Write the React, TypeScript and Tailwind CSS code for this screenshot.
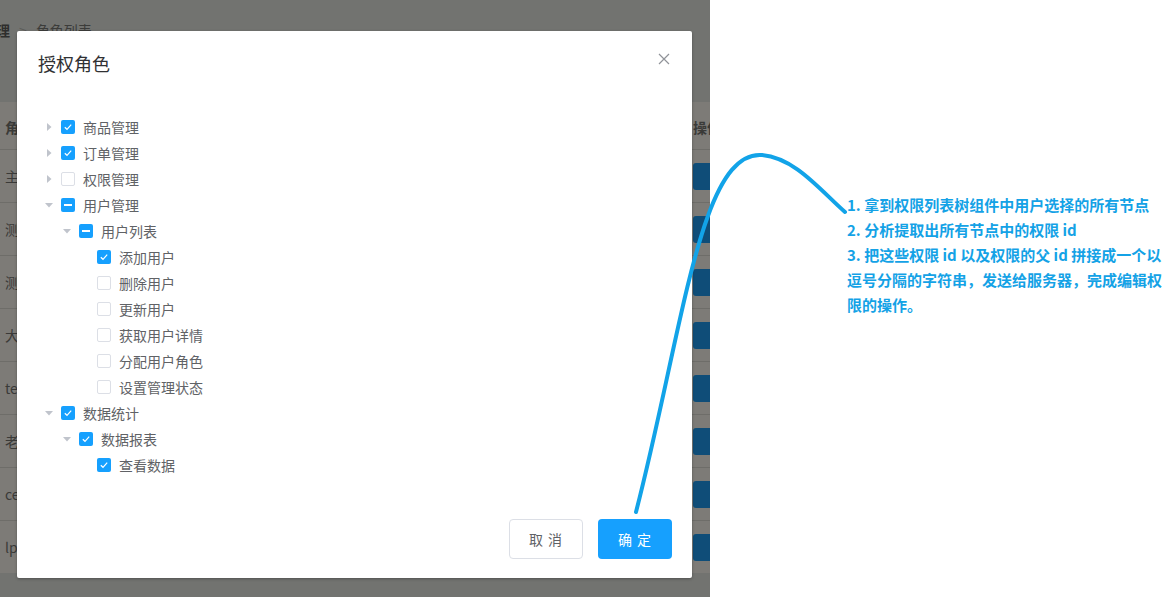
import React from "react";

type State = "checked" | "unchecked" | "indeterminate";
type Caret = "right" | "down" | null;

const tree: { level: number; label: string; state: State; caret: Caret }[] = [
  { level: 1, label: "商品管理", state: "checked", caret: "right" },
  { level: 1, label: "订单管理", state: "checked", caret: "right" },
  { level: 1, label: "权限管理", state: "unchecked", caret: "right" },
  { level: 1, label: "用户管理", state: "indeterminate", caret: "down" },
  { level: 2, label: "用户列表", state: "indeterminate", caret: "down" },
  { level: 3, label: "添加用户", state: "checked", caret: null },
  { level: 3, label: "删除用户", state: "unchecked", caret: null },
  { level: 3, label: "更新用户", state: "unchecked", caret: null },
  { level: 3, label: "获取用户详情", state: "unchecked", caret: null },
  { level: 3, label: "分配用户角色", state: "unchecked", caret: null },
  { level: 3, label: "设置管理状态", state: "unchecked", caret: null },
  { level: 1, label: "数据统计", state: "checked", caret: "down" },
  { level: 2, label: "数据报表", state: "checked", caret: "down" },
  { level: 3, label: "查看数据", state: "checked", caret: null },
];

const rows = ["主管", "测试角色", "测试角色2", "大boss", "test", "老板", "ceshi", "lp"];

function CaretIcon({ caret }: { caret: Caret }) {
  return (
    <span className="w-[24px] h-[12px] flex items-center justify-center shrink-0">
      {caret === "right" && (
        <svg width="12" height="12" viewBox="0 0 12 12">
          <polygon points="4,2 8.5,6 4,10" fill="#c0c4cc" />
        </svg>
      )}
      {caret === "down" && (
        <svg width="12" height="12" viewBox="0 0 12 12">
          <polygon points="2,4 10,4 6,8.5" fill="#c0c4cc" />
        </svg>
      )}
    </span>
  );
}

function Checkbox({ state }: { state: State }) {
  if (state === "unchecked") {
    return <span className="w-[14px] h-[14px] rounded-[2px] border border-[#dcdfe6] bg-white shrink-0" />;
  }
  return (
    <span className="w-[14px] h-[14px] rounded-[2px] bg-[#16a0fe] shrink-0 flex items-center justify-center">
      {state === "checked" ? (
        <svg width="14" height="14" viewBox="0 0 14 14">
          <polyline points="3.8,7.2 6,9.3 10.2,4.6" fill="none" stroke="white" strokeWidth="1.2" />
        </svg>
      ) : (
        <span className="w-[8px] h-[2px] bg-white" />
      )}
    </span>
  );
}

export default function App() {
  return (
    <div className="relative flex w-[1172px] h-[597px] overflow-hidden font-['Noto_Sans_CJK_SC',sans-serif]">
      {/* Left: app under overlay */}
      <div className="relative w-[710px] h-full bg-[#727370] flex flex-col overflow-hidden">
        <div className="h-[102px] shrink-0 flex items-start pt-[20px] text-[14px] leading-[20px]">
          <span className="text-[#2e2e2d] font-bold ml-[-4px]">理</span>
          <span className="text-[#5d5e5b] mx-[9px]">&gt;</span>
          <span className="text-[#3c3c3a]">角色列表</span>
        </div>
        <div className="h-[471px] shrink-0 bg-[#7d7b77] flex flex-col">
          <div className="h-[47px] flex items-center text-[14px] font-bold text-[#3a3a38]">
            <span className="flex-1 pl-[5px] pt-[3px]">角色名称</span>
            <span className="w-[17px] overflow-hidden whitespace-nowrap pt-[3px]">操作</span>
          </div>
          {rows.map((r) => (
            <div key={r} className="h-[53px] border-t border-[#6e6d69] flex items-center text-[14px] text-[#3a3a38]">
              <span className="flex-1 pl-[5px]">{r}</span>
              <span className="w-[17px] overflow-hidden flex">
                <span className="w-[60px] h-[27px] shrink-0 rounded-[3px] bg-[#0f4d78]" />
              </span>
            </div>
          ))}
        </div>
        <div className="flex-1" />

        {/* Dialog */}
        <div className="absolute left-[17px] top-[31px] w-[675px] h-[547px] bg-white rounded-[2px] shadow-[0_1px_3px_rgba(0,0,0,0.3)] flex flex-col">
          <div className="relative pt-[20px] px-[20px] pb-[10px] flex items-center justify-between">
            <span className="text-[18px] leading-[24px] text-[#303133] ml-[1px]">授权角色</span>
            <svg width="12" height="12" viewBox="0 0 12 12" className="mr-[2px] mt-[-8px]">
              <path d="M1 1 L11 11 M11 1 L1 11" stroke="#909399" strokeWidth="1.2" />
            </svg>
          </div>
          <div className="pt-[29px] px-[20px] pb-[31px] flex flex-col">
            {tree.map((n, i) => (
              <div
                key={i}
                className={
                  "h-[26px] flex items-center " +
                  (n.level === 1 ? "pl-0" : n.level === 2 ? "pl-[18px]" : "pl-[36px]")
                }
              >
                <CaretIcon caret={n.caret} />
                <Checkbox state={n.state} />
                <span className="ml-[8px] text-[14px] text-[#606266] leading-[20px]">{n.label}</span>
              </div>
            ))}
          </div>
          <div className="flex justify-end gap-[15px] pt-[10px] pr-[20px]">
            <button className="w-[74px] h-[40px] rounded-[4px] border border-[#dcdfe6] bg-white text-[14px] text-[#606266] tracking-[1px]">
              取 消
            </button>
            <button className="w-[74px] h-[40px] rounded-[4px] bg-[#16a0fe] text-[14px] text-white tracking-[1px]">
              确 定
            </button>
          </div>
        </div>
      </div>

      {/* Right: annotation */}
      <div className="flex-1 bg-white pl-[137px] pt-[192px]">
        <div className="text-[15px] leading-[25px] font-bold text-[#14a2e6] whitespace-nowrap">
          <div>1. 拿到权限列表树组件中用户选择的所有节点</div>
          <div>2. 分析提取出所有节点中的权限 id</div>
          <div>3. 把这些权限 id 以及权限的父 id 拼接成一个以</div>
          <div>逗号分隔的字符串，发送给服务器，完成编辑权</div>
          <div>限的操作。</div>
        </div>
      </div>

      <svg className="absolute inset-0 pointer-events-none" width="1172" height="597" viewBox="0 0 1172 597">
        <path
          d="M636 512 C 683 330, 700 150, 762 155 C 795 158, 820 190, 845 212"
          fill="none"
          stroke="#12a3e8"
          strokeWidth="4"
          strokeLinecap="round"
        />
      </svg>
    </div>
  );
}
